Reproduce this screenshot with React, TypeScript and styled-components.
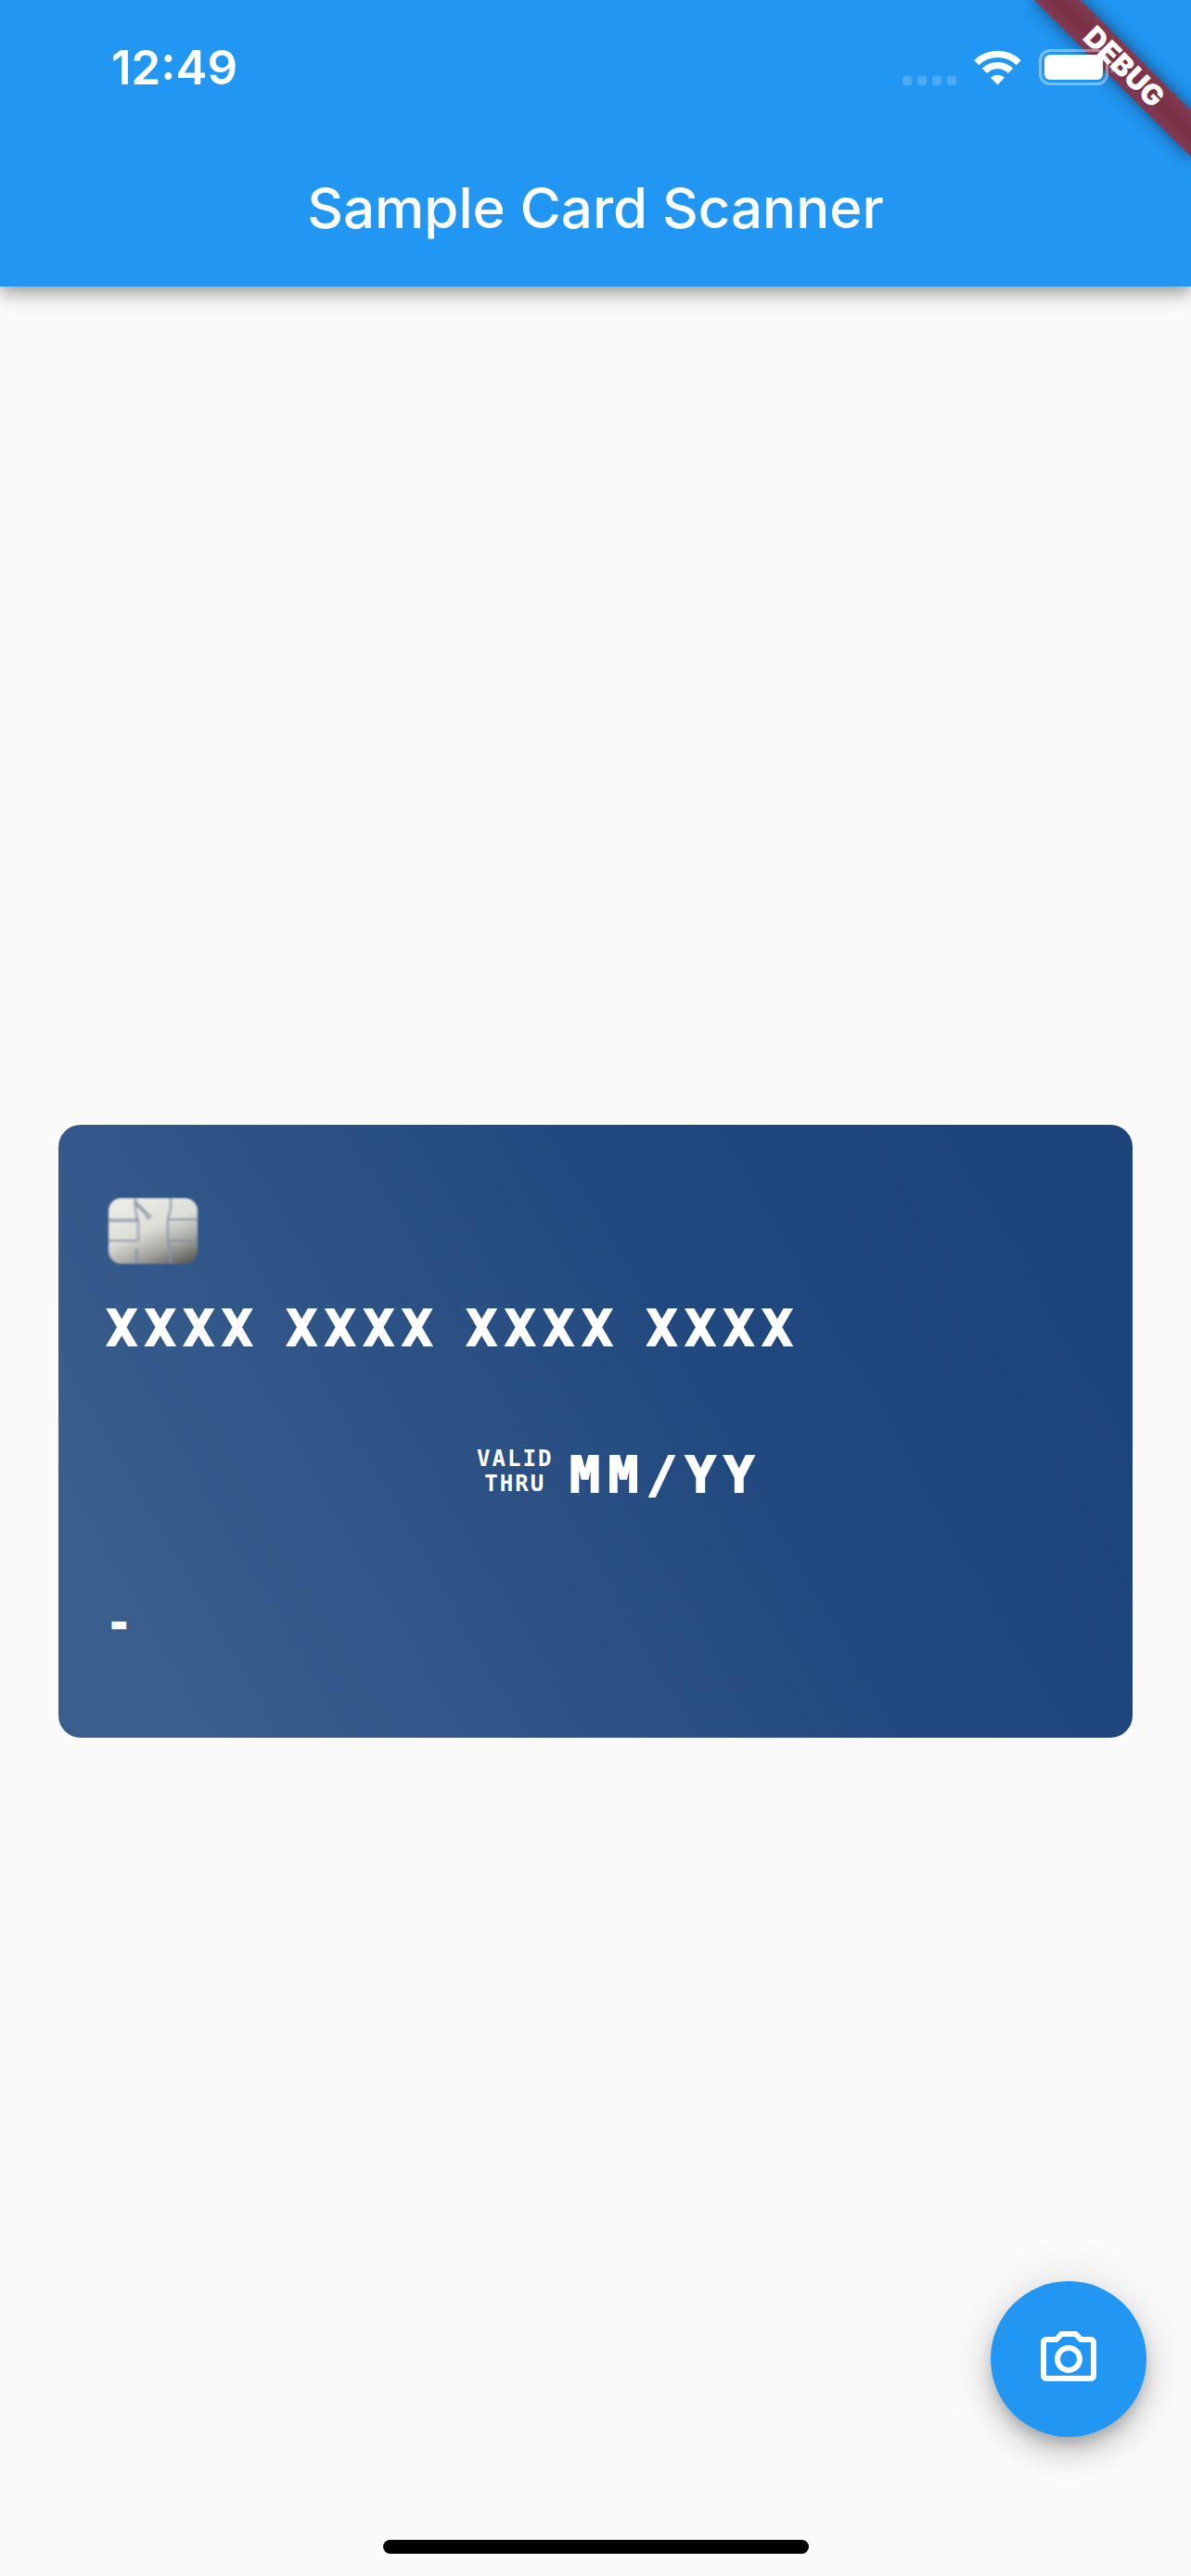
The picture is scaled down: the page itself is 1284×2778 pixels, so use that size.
import React from "react";
import styled, { createGlobalStyle } from "styled-components";

const BLUE = "#2196f3";

const GlobalStyle = createGlobalStyle`
  * { box-sizing: border-box; }
  body { margin: 0; background: #fafafa; }
`;

const Screen = styled.div`
  position: relative;
  display: flex;
  flex-direction: column;
  min-height: 100vh;
  overflow: hidden;
  background: #fafafa;
  color: #ffffff;
  font-family: Inter, Roboto, sans-serif;
`;

const TopBar = styled.header`
  display: flex;
  flex-direction: column;
  background: ${BLUE};
  box-shadow:
    0 6px 12px -3px rgba(0, 0, 0, 0.2),
    0 12px 15px 0 rgba(0, 0, 0, 0.14),
    0 3px 30px 0 rgba(0, 0, 0, 0.12);
`;

const StatusBar = styled.div`
  position: relative;
  z-index: 2;
  display: flex;
  align-items: center;
  justify-content: space-between;
  height: 141px;
  padding: 4px 81px 0 120px;
`;

const Clock = styled.time`
  font-size: 51px;
  line-height: 60px;
  font-weight: 600;
`;

const StatusIcons = styled.div`
  display: flex;
  align-items: flex-end;
  gap: 19px;
`;

const SignalDots = styled.div`
  display: flex;
  gap: 6px;
`;

const SignalDot = styled.span`
  width: 10px;
  height: 10px;
  border-radius: 3px;
  background: rgba(255, 255, 255, 0.2);
`;

const Icon = styled.svg`
  display: block;
  flex: none;
`;

const Title = styled.h1`
  margin: 0;
  height: 168px;
  font-size: 60px;
  line-height: 166px;
  font-weight: 500;
  text-align: center;
`;

const BannerCorner = styled.div`
  position: absolute;
  top: 0;
  right: 0;
  z-index: 1;
  width: 280px;
  height: 280px;
  overflow: hidden;
`;

const Banner = styled.div`
  position: absolute;
  top: 54px;
  right: -48px;
  width: 240px;
  height: 36px;
  transform: rotate(45deg);
  background: linear-gradient(#803c56, #7a3144 45%, #7a3144 55%, #803c56);
  box-shadow: 0 0 18px rgba(0, 0, 0, 0.5);
  font-size: 31px;
  line-height: 36px;
  font-weight: 900;
  text-align: center;
`;

const Main = styled.main`
  flex: 1;
  display: flex;
  align-items: center;
  padding: 0 63px;
`;

const Card = styled.section`
  flex: 1;
  display: flex;
  flex-direction: column;
  height: 661px;
  padding: 78px 52px;
  border-radius: 24px;
  background: linear-gradient(240deg, #1b447b 10%, #22497f 40%, #315688 70%, #3a5e8d 90%);
  font-family: "DejaVu Sans Mono", monospace;
  font-weight: 700;
`;

const CardNumber = styled.div`
  display: flex;
  gap: 28px;
  margin-top: 36px;
  font-size: 54px;
  line-height: 66px;
  letter-spacing: 9px;
  -webkit-text-stroke: 2px #ffffff;
`;

const Validity = styled.div`
  display: flex;
  align-items: center;
  justify-content: center;
  gap: 18px;
  margin-top: 92px;
  padding-left: 52px;
`;

const ValidLabel = styled.div`
  padding-bottom: 8px;
  font-size: 24px;
  line-height: 27px;
  letter-spacing: 2px;
  text-align: center;
`;

const Expiry = styled.div`
  font-size: 54px;
  line-height: 66px;
  letter-spacing: 9px;
  -webkit-text-stroke: 2px #ffffff;
`;

const Holder = styled.div`
  margin-top: 94px;
  font-size: 44px;
  line-height: 66px;
  -webkit-text-stroke: 2px #ffffff;
`;

const ScanButton = styled.button`
  position: absolute;
  right: 48px;
  bottom: 150px;
  display: flex;
  align-items: center;
  justify-content: center;
  width: 168px;
  height: 168px;
  padding: 0;
  border: 0;
  border-radius: 50%;
  background: ${BLUE};
  color: #ffffff;
  cursor: pointer;
  box-shadow:
    0 9px 15px -3px rgba(0, 0, 0, 0.2),
    0 18px 30px 0 rgba(0, 0, 0, 0.14),
    0 3px 54px 0 rgba(0, 0, 0, 0.12);
`;

const HomeIndicator = styled.div`
  position: absolute;
  left: 0;
  right: 0;
  bottom: 24px;
  width: 459px;
  height: 15px;
  margin: 0 auto;
  border-radius: 8px;
  background: #000000;
`;

function WifiIcon() {
  return (
    <Icon width="51" height="38" viewBox="0 0 51 38" aria-label="Wi-Fi">
      <g fill="none" stroke="#fff" strokeWidth="7.4">
        <path d="M2.8 13.6A32.5 32.5 0 0 1 48.2 13.6" />
        <path d="M11.4 22.4A20 20 0 0 1 39.6 22.4" />
      </g>
      <path fill="#fff" d="M25.5 37.5L18 29.8A10.8 10.8 0 0 1 33 29.8Z" />
    </Icon>
  );
}

function BatteryIcon() {
  return (
    <Icon width="83" height="39" viewBox="0 0 83 39" aria-label="Battery full">
      <rect x="1.5" y="1.5" width="72" height="36" rx="10.5" fill="none" stroke="#fff" strokeOpacity="0.4" strokeWidth="3" />
      <rect x="6" y="6" width="63" height="27" rx="6" fill="#fff" />
      <path d="M78 13Q82.500 15 82.500 19.500T78 26Z" fill="#fff" fillOpacity="0.4" />
    </Icon>
  );
}

function ChipIcon() {
  return (
    <Icon width="100" height="73" viewBox="0 0 100 73" aria-label="Chip">
      <defs>
        <linearGradient id="metal" x1="0.25" y1="0" x2="0.8" y2="1">
          <stop offset="0" stopColor="#ecece8" />
          <stop offset="0.45" stopColor="#deded8" />
          <stop offset="0.75" stopColor="#a5a5a0" />
          <stop offset="1" stopColor="#62625f" />
        </linearGradient>
        <filter id="soft" x="-5%" y="-5%" width="110%" height="110%">
          <feGaussianBlur stdDeviation="0.8" />
        </filter>
      </defs>
      <g filter="url(#soft)">
        <rect x="2" y="1" width="96" height="71" rx="14" fill="url(#metal)" />
        <g fill="none" stroke="#8592a6">
          <path d="M2 25H34" strokeWidth="4" strokeOpacity="0.7" />
          <path d="M2 47H34M66 24H98M66 47H98" strokeWidth="2" />
          <path d="M31 1V14L34 27V47M69 1V12L66 24V47L69 58" strokeWidth="3" strokeOpacity="0.65" />
          <path d="M32 56V72M69 58V72" strokeWidth="4" strokeOpacity="0.65" />
          <path d="M30 5L44 19" strokeWidth="4" strokeOpacity="0.8" />
          <circle cx="45" cy="21" r="2" strokeWidth="3" strokeOpacity="0.6" />
        </g>
      </g>
    </Icon>
  );
}

function CameraIcon() {
  return (
    <Icon width="72" height="72" viewBox="0 0 24 24" fill="currentColor" aria-hidden="true">
      <path d="M14.120 4l1.830 2H20v12H4V6h4.050l1.830-2h4.240M15 2H9L7.170 4H4c-1.100 0-2 .9-2 2v12c0 1.100.9 2 2 2h16c1.100 0 2-.9 2-2V6c0-1.100-.9-2-2-2h-3.170L15 2zm-3 7c1.650 0 3 1.350 3 3s-1.350 3-3 3-3-1.350-3-3 1.350-3 3-3m0-2c-2.760 0-5 2.240-5 5s2.240 5 5 5 5-2.240 5-5-2.240-5-5-5z" />
    </Icon>
  );
}

export default function App() {
  const groups = ["XXXX", "XXXX", "XXXX", "XXXX"];
  return (
    <Screen>
      <GlobalStyle />
      <TopBar>
        <StatusBar>
          <Clock>12:49</Clock>
          <StatusIcons>
            <SignalDots>
              {[0, 1, 2, 3].map((n) => (
                <SignalDot key={n} />
              ))}
            </SignalDots>
            <WifiIcon />
            <BatteryIcon />
          </StatusIcons>
        </StatusBar>
        <Title>Sample Card Scanner</Title>
      </TopBar>
      <BannerCorner>
        <Banner>DEBUG</Banner>
      </BannerCorner>
      <Main>
        <Card>
          <ChipIcon />
          <CardNumber>
            {groups.map((group, n) => (
              <span key={n}>{group}</span>
            ))}
          </CardNumber>
          <Validity>
            <ValidLabel>
              VALID
              <br />
              THRU
            </ValidLabel>
            <Expiry>MM/YY</Expiry>
          </Validity>
          <Holder>-</Holder>
        </Card>
      </Main>
      <ScanButton type="button" aria-label="Scan card">
        <CameraIcon />
      </ScanButton>
      <HomeIndicator />
    </Screen>
  );
}
